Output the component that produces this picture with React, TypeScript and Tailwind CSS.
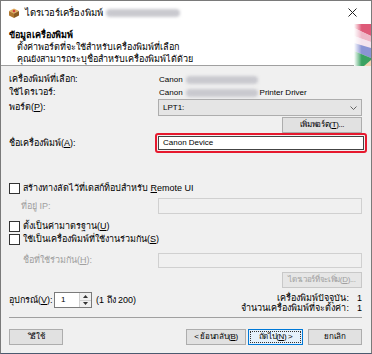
import React from 'react';

const font = { fontFamily: '"Tahoma", "Liberation Sans", "Noto Sans", sans-serif' };

const Blur = ({ w }: { w: number }) => (
  <span className="inline-block h-[8px] bg-[#c9c9cf] blur-[1.5px] rounded-sm align-middle" style={{ width: w }} />
);

const Checkbox = ({ label }: { label: React.ReactNode }) => (
  <div className="flex items-center h-[13px] gap-[3px]">
    <span className="w-[11px] h-[11px] border border-[#333] bg-white" />
    <span>{label}</span>
  </div>
);

const Btn = ({ children, className = '' }: { children: React.ReactNode; className?: string }) => (
  <div className={'h-[16px] flex items-center justify-center border border-[#adadad] bg-[#e1e1e1] text-[8px] tracking-[-0.35px] ' + className}>
    {children}
  </div>
);

function AppIcon() {
  return (
    <svg width="12" height="12" viewBox="0 0 12 12">
      <path d="M1 4 L6 1.5 L11 4 L6 6.5 Z" fill="#e0b060" />
      <path d="M1 4 L6 6.5 L6 11 L1 8.5 Z" fill="#b07830" />
      <path d="M11 4 L6 6.5 L6 11 L11 8.5 Z" fill="#8a5a22" />
      <circle cx="6" cy="4" r="1.3" fill="#d04040" />
    </svg>
  );
}

function Banner() {
  return (
    <svg width="17" height="42" viewBox="0 0 17 42">
      <defs>
        <linearGradient id="fade" x1="0" x2="1" y1="0" y2="0">
          <stop offset="0" stopColor="#fff" stopOpacity="1" />
          <stop offset="0.45" stopColor="#fff" stopOpacity="0" />
        </linearGradient>
      </defs>
      <rect width="17" height="42" fill="#f6e2e6" />
      <polygon points="0,0 17,0 17,12 0,4" fill="#de5a78" />
      <polygon points="0,4 17,12 17,18 0,12" fill="#eeb8c8" />
      <polygon points="0,12 17,18 17,24 0,19" fill="#f4e4ee" />
      <polygon points="0,19 17,24 17,34 0,27" fill="#8a94d4" />
      <polygon points="0,27 17,34 17,42 0,42" fill="#3aa262" />
      <polygon points="10,42 17,36 17,42" fill="#f4d4b4" />
      <rect width="17" height="42" fill="url(#fade)" />
    </svg>
  );
}

export default function App() {
  return (
    <div
      className="w-[372px] h-[354px] border border-[#7a7a7a] border-b-[#4a5a70] bg-[#f0f0f0] flex flex-col text-[9px] text-black leading-none overflow-hidden whitespace-nowrap"
      style={font}
    >
      {/* title bar */}
      <div className="h-[23px] bg-white flex items-center pl-[7px] pr-[14px]">
        <AppIcon />
        <span className="ml-[5px] text-[9.5px]">ไดรเวอร์เครื่องพิมพ์</span>
        <span className="ml-[3px]"><Blur w={74} /></span>
        <span className="ml-auto text-[#222]">
          <svg width="9" height="9" viewBox="0 0 9 9">
            <path d="M0.5 0.5 L8.5 8.5 M8.5 0.5 L0.5 8.5" stroke="#222" strokeWidth="1" />
          </svg>
        </span>
      </div>

      {/* header */}
      <div className="h-[42px] bg-white border-b border-[#a0a0a0] flex">
        <div className="flex-1 pl-[8px] pt-[5px] flex flex-col">
          <div className="h-[12px] flex items-center font-bold">ข้อมูลเครื่องพิมพ์</div>
          <div className="h-[12px] flex items-center pl-[8px]">ตั้งค่าพอร์ตที่จะใช้สำหรับเครื่องพิมพ์ที่เลือก</div>
          <div className="h-[12px] flex items-center pl-[8px]">คุณยังสามารถระบุชื่อสำหรับเครื่องพิมพ์ได้ด้วย</div>
        </div>
        <Banner />
      </div>

      {/* body */}
      <div className="flex-1 flex flex-col pl-[8px] pr-[9px] pt-[7px]">
        <div className="h-[13px] flex items-center">
          <span className="w-[150px]">เครื่องพิมพ์ที่เลือก:</span>
          <span className="text-[8px]">Canon</span>
          <span className="ml-[3px]"><Blur w={72} /></span>
        </div>
        <div className="h-[13px] flex items-center">
          <span className="w-[150px]">ใช้ไดรเวอร์:</span>
          <span className="text-[8px]">Canon</span>
          <span className="ml-[3px]"><Blur w={72} /></span>
          <span className="ml-[2px] text-[8px]">Printer Driver</span>
        </div>
        <div className="h-[17px] flex items-center">
          <span className="w-[149px]">พอร์ต(<u>P</u>):</span>
          <div className="flex-1 h-full border border-[#adadad] bg-[#e5e5e5] flex items-center px-[4px] text-[8px]">
            <span>LPT1:</span>
            <svg className="ml-auto" width="7" height="4" viewBox="0 0 7 4">
              <path d="M0.5 0.5 L3.5 3.5 L6.5 0.5" fill="none" stroke="#555" strokeWidth="0.9" />
            </svg>
          </div>
        </div>
        <div className="flex justify-end mt-[1px]">
          <Btn className="w-[80px]">เพิ่มพอร์ต(<u>T</u>)...</Btn>
        </div>
        <div className="h-[20px] flex items-center -mr-[5px]">
          <span className="w-[146px]">ชื่อเครื่องพิมพ์(<u>A</u>):</span>
          <div className="flex-1 h-full border-2 border-[#e6192e] rounded-[3px] p-[1px]">
            <div className="h-full border border-[#444] bg-white flex items-center px-[4px] text-[8px]">Canon Device</div>
          </div>
        </div>

        <div className="mt-[29px]">
          <Checkbox label={<>สร้างทางลัดไว้ที่เดสก์ท็อปสำหรับ <u>R</u>emote UI</>} />
        </div>
        <div className="h-[16px] mt-[3px] flex items-center">
          <span className="w-[149px] pl-[12px] text-[#a0a0a0]">ที่อยู่ IP:</span>
          <div className="flex-1 h-full border border-[#d0d0d0] bg-[#f0f0f0]" />
        </div>
        <div className="mt-[6px]">
          <Checkbox label={<>ตั้งเป็นค่ามาตรฐาน(<u>U</u>)</>} />
        </div>
        <Checkbox label={<>ใช้เป็นเครื่องพิมพ์ที่ใช้งานร่วมกัน(<u>S</u>)</>} />
        <div className="h-[15px] mt-[7px] flex items-center">
          <span className="w-[149px] pl-[14px] text-[#a0a0a0]">ชื่อที่ใช้ร่วมกัน(<u>H</u>):</span>
          <div className="flex-1 h-full border border-[#d0d0d0] bg-[#f0f0f0]" />
        </div>
        <div className="flex justify-end mt-[4px]">
          <Btn className="w-[80px] border-[#c8c8c8] bg-[#e6e6e6] text-[#a0a0a0]">ไดรเวอร์ที่จะเพิ่ม(<u>D</u>)...</Btn>
        </div>

        <div className="flex mt-[4px]">
          <div className="flex items-center h-[16px]">
            <span className="w-[45px]">อุปกรณ์(<u>V</u>):</span>
            <div className="w-[38px] h-full border border-[#7a7a7a] bg-white flex">
              <span className="flex-1 flex items-center pl-[6px] text-[8px]">1</span>
              <div className="w-[12px] flex flex-col border-l border-[#d0d0d0]">
                <div className="flex-1 flex items-center justify-center bg-[#f0f0f0] border-b border-[#d0d0d0]">
                  <svg width="5" height="3" viewBox="0 0 5 3"><path d="M0 3 L2.5 0 L5 3 Z" fill="#333" /></svg>
                </div>
                <div className="flex-1 flex items-center justify-center bg-[#f0f0f0]">
                  <svg width="5" height="3" viewBox="0 0 5 3"><path d="M0 0 L2.5 3 L5 0 Z" fill="#333" /></svg>
                </div>
              </div>
            </div>
            <span className="ml-[4px]">(1 ถึง 200)</span>
          </div>
          <div className="ml-auto flex flex-col pt-[1px]">
            <div className="h-[10px] flex items-center justify-end">
              <span>เครื่องพิมพ์ปัจจุบัน:</span>
              <span className="w-[13px] text-right">1</span>
            </div>
            <div className="h-[10px] flex items-center justify-end">
              <span>จำนวนเครื่องพิมพ์ที่จะตั้งค่า:</span>
              <span className="w-[13px] text-right">1</span>
            </div>
          </div>
        </div>

        <div className="mt-[4px] border-t border-[#a0a0a0]" />

        <div className="flex mt-[11px]">
          <Btn className="w-[54px]">วิธีใช้</Btn>
          <Btn className="w-[60px] ml-auto">&lt; ย้อนกลับ(<u>B</u>)</Btn>
          <div className="w-[55px] h-[16px] ml-[2px] border border-[#0078d7] bg-[#e5f1fb] p-[1px] text-[8px] tracking-[-0.35px]">
            <div className="h-full border border-dotted border-[#333] flex items-center justify-center">ถัดไป(<u>N</u>) &gt;</div>
          </div>
          <Btn className="w-[54px] ml-[5px]">ยกเลิก</Btn>
        </div>
      </div>
    </div>
  );
}
